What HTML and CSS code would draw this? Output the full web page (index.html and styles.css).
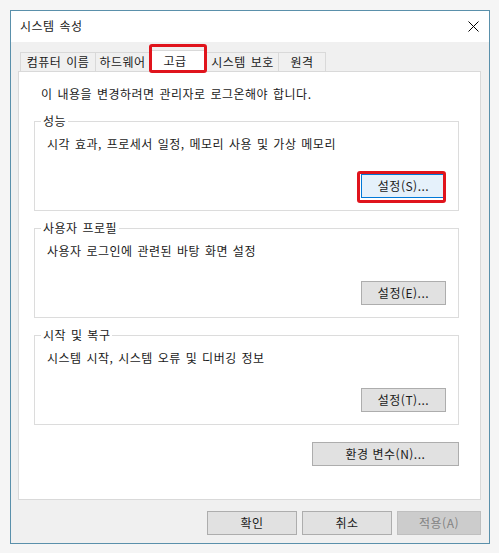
FILE: index.html
```html
<!DOCTYPE html>
<html lang="ko">
<head>
    <meta charset="UTF-8">
    <meta name="viewport" content="width=device-width, initial-scale=1.0">
    <title>시스템 속성</title>
    <link rel="stylesheet" href="styles.css">
</head>
<body>
    <div class="screen">
        <div class="window">
            <div class="titlebar">
                <span class="title">시스템 속성</span>
                <span class="close">
                    <svg width="11" height="11" viewBox="0 0 11 11">
                        <path d="M0.5 0.5 L10.5 10.5 M10.5 0.5 L0.5 10.5" stroke="#000" stroke-width="1" fill="none"/>
                    </svg>
                </span>
            </div>

            <div class="body">
                <div class="tabs">
                    <div class="tab">컴퓨터 이름</div>
                    <div class="tab">하드웨어</div>
                    <div class="tab active marked">고급</div>
                    <div class="tab">시스템 보호</div>
                    <div class="tab">원격</div>
                </div>

                <div class="panel">
                    <p class="note">이 내용을 변경하려면 관리자로 로그온해야 합니다.</p>

                    <fieldset class="group">
                        <legend>성능</legend>
                        <p class="desc">시각 효과, 프로세서 일정, 메모리 사용 및 가상 메모리</p>
                        <div class="actions">
                            <button class="btn default marked">설정(S)...</button>
                        </div>
                    </fieldset>

                    <fieldset class="group">
                        <legend>사용자 프로필</legend>
                        <p class="desc">사용자 로그인에 관련된 바탕 화면 설정</p>
                        <div class="actions">
                            <button class="btn">설정(E)...</button>
                        </div>
                    </fieldset>

                    <fieldset class="group">
                        <legend>시작 및 복구</legend>
                        <p class="desc">시스템 시작, 시스템 오류 및 디버깅 정보</p>
                        <div class="actions">
                            <button class="btn">설정(T)...</button>
                        </div>
                    </fieldset>

                    <div class="env">
                        <button class="btn wide">환경 변수(N)...</button>
                    </div>
                </div>

                <div class="footer">
                    <button class="btn dialog">확인</button>
                    <button class="btn dialog">취소</button>
                    <button class="btn dialog apply" disabled>적용(A)</button>
                </div>
            </div>
        </div>
    </div>
</body>
</html>
```

FILE: styles.css
```css
* {
    box-sizing: border-box;
}
body {
    margin: 0;
    background-color: #f5f5f5;
    font-family: "Noto Sans CJK KR", "Malgun Gothic", sans-serif;
    font-size: 12px;
    letter-spacing: 0.5px;
    word-spacing: 1px;
    color: #1a1a1a;
}
.screen {
    width: 499px;
    height: 553px;
    padding: 10px 0 0 10px;
}
.window {
    width: 480px;
    height: 534px;
    border: 1px solid #5a90ab;
    background-color: #f0f0f0;
}
.titlebar {
    height: 31px;
    background-color: #fff;
    display: flex;
    align-items: center;
    justify-content: space-between;
    padding: 0 10px 2px 9px;
}
.title {
    line-height: 16px;
}
.close {
    display: flex;
    margin-top: 2px;
}
.body {
    padding: 10px 8px 8px 9px;
}

/* tab strip */
.tabs {
    display: flex;
    align-items: flex-end;
    height: 19px;
}
.tab {
    height: 19px;
    line-height: 17px;
    text-align: center;
    border: 1px solid #d9d9d9;
    border-bottom: none;
    margin-left: -1px;
    background-color: #f0f0f0;
    white-space: nowrap;
}
.tab:nth-child(1) { width: 76px; margin-left: 0; }
.tab:nth-child(2) { width: 55px; }
.tab:nth-child(3) { width: 58px; }
.tab:nth-child(4) { width: 73px; }
.tab:nth-child(5) { width: 48px; }
.tab.active {
    position: relative;
    z-index: 1;
    height: 22px;
    line-height: 20px;
    margin-bottom: -1px;
    padding-right: 6px;
    background-color: #fff;
}

/* red highlight */
.marked::after {
    content: "";
    position: absolute;
    border: 3px solid #e0141c;
    border-radius: 3px;
    pointer-events: none;
}
.tab.marked::after {
    top: -7px;
    bottom: -1px;
    left: -1px;
    right: -1px;
}
.btn.marked {
    position: relative;
}
.btn.marked::after {
    top: -4px;
    bottom: -6px;
    left: -5px;
    right: -1px;
}

.panel {
    height: 429px;
    margin-left: -2px;
    background-color: #fff;
    border: 1px solid #d9d9d9;
    padding: 14px 21px 0 15px;
}
.note {
    margin: 0 0 11px 7px;
    line-height: 16px;
}
.group {
    margin: 0 0 9px;
    padding: 7px 12px 12px 6px;
    border: 1px solid #dcdcdc;
    min-width: 0;
}
.group legend {
    padding: 0 2px;
    line-height: 16px;
}
.desc {
    margin: 0 0 22px 6px;
    line-height: 16px;
}
.actions {
    display: flex;
    justify-content: flex-end;
}
.env {
    display: flex;
    justify-content: flex-end;
    margin-top: 17px;
}

/* buttons */
.btn {
    height: 24px;
    width: 85px;
    padding: 0;
    font-family: inherit;
    font-size: 12px;
    letter-spacing: 0.5px;
    color: #1a1a1a;
    background-color: #e1e1e1;
    border: 1px solid #adadad;
    border-radius: 0;
    line-height: 20px;
}
.btn.default {
    background-color: #e5f1fb;
    border-color: #0078d7;
}
.btn.wide {
    width: 147px;
}
.footer {
    display: flex;
    justify-content: flex-end;
    gap: 5px;
    margin-top: 11px;
}
.btn.dialog {
    width: 90px;
}
.btn.apply {
    width: 84px;
    color: #838383;
    background-color: #cccccc;
    border-color: #bfbfbf;
}
```
